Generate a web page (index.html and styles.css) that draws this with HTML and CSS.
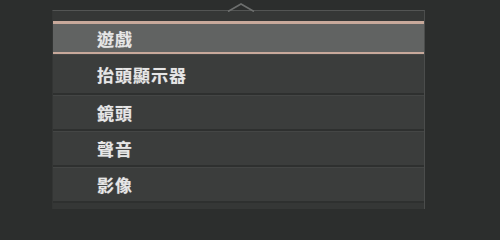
FILE: index.html
```html
<!DOCTYPE html>
<html lang="zh-Hant">
<head>
<meta charset="utf-8">
<link rel="stylesheet" href="styles.css">
</head>
<body>
<div class="stage">
  <div class="panel">
    <svg class="caret" width="28" height="10" viewBox="0 0 28 10"><polyline points="1,9.5 14,2 27,9.5" fill="none" stroke="#6d6f6e" stroke-width="1.6"/></svg>
    <ul class="menu">
      <li class="item active">遊戲</li>
      <li class="item tall">抬頭顯示器</li>
      <li class="item">鏡頭</li>
      <li class="item">聲音</li>
      <li class="item">影像</li>
    </ul>
  </div>
</div>
</body>
</html>
```
FILE: styles.css
```css
html, body {
  margin: 0;
  padding: 0;
  background: #2c2e2d;
  width: 500px;
  height: 209px;
  overflow: hidden;
}
.stage {
  padding: 10px 0 0 52px;
}
.panel {
  position: relative;
  width: 373px;
  height: 220px;
  background: #353736;
  border-top: 1px solid #535554;
  border-right: 1px solid #4b4d4c;
  border-left: 1px solid #333534;
  box-sizing: border-box;
  padding-top: 10px;
}
.caret {
  position: absolute;
  top: -9px;
  left: 174px;
}
.menu {
  list-style: none;
  margin: 0;
  padding: 0;
  background: #3b3d3c;
}
.item {
  height: 34px;
  line-height: 35px;
  padding-left: 44px;
  color: #e6e6e6;
  font-family: "Noto Sans CJK TC", "Noto Sans CJK SC", sans-serif;
  font-size: 17px;
  font-weight: 700;
  letter-spacing: 1px;
  border-bottom: 2px solid #2e302f;
  box-shadow: inset 0 1px 0 #444645;
  text-shadow: 0 0 1px rgba(255,255,255,0.4);
}
.item.tall {
  height: 39px;
  line-height: 42px;
}
.item.active {
  height: 28px;
  line-height: 29px;
  background: #616362;
  border-top: 3px solid #c8a99b;
  border-bottom: 2px solid #c8a99b;
  box-shadow: 0 1px 0 #4a3a35;
}
```
